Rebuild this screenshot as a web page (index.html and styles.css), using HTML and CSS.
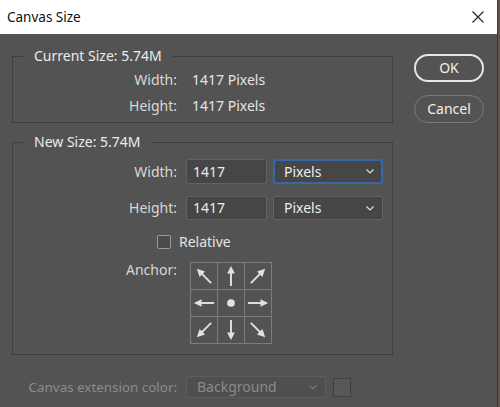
FILE: index.html
```html
<!DOCTYPE html>
<html>
<head>
<meta charset="utf-8">
<link rel="stylesheet" href="styles.css">
</head>
<body>
<div class="window">
  <div class="dialog">
    <div class="titlebar">
      <span class="title">Canvas Size</span>
      <svg class="close" width="12" height="12" viewBox="0 0 12 12"><path d="M0.5 0.5 L11.5 11.5 M11.5 0.5 L0.5 11.5" stroke="#222" stroke-width="1.1" fill="none"/></svg>
    </div>
    <div class="body">
      <div class="main">
        <fieldset class="group current">
          <legend>Current Size: 5.74M</legend>
          <div class="info-grid">
            <span class="lbl">Width:</span><span class="val">1417 Pixels</span>
            <span class="lbl">Height:</span><span class="val">1417 Pixels</span>
          </div>
        </fieldset>
        <fieldset class="group newsize">
          <legend>New Size: 5.74M</legend>
          <div class="form-grid">
            <span class="lbl">Width:</span>
            <div class="controls">
              <div class="input">1417</div>
              <div class="select focused"><span>Pixels</span><svg class="chev" width="8" height="5" viewBox="0 0 8 5"><path d="M0.5 0.5 L4 4 L7.5 0.5" stroke="#ddd" stroke-width="1.2" fill="none"/></svg></div>
            </div>
            <span class="lbl">Height:</span>
            <div class="controls">
              <div class="input">1417</div>
              <div class="select"><span>Pixels</span><svg class="chev" width="8" height="5" viewBox="0 0 8 5"><path d="M0.5 0.5 L4 4 L7.5 0.5" stroke="#ddd" stroke-width="1.2" fill="none"/></svg></div>
            </div>
            <div class="relative-row"><span class="checkbox"></span><span>Relative</span></div>
            <span class="lbl anchor-lbl">Anchor:</span>
            <div class="anchor">
              <div class="cell"><svg viewBox="0 0 27 27"><g transform="rotate(-45 13.5 13.5)"><line x1="13.5" y1="9" x2="13.5" y2="24" stroke="#e2e2e2" stroke-width="2"/><polygon points="13.5,3 9.5,11 17.5,11" fill="#e2e2e2"/></g></svg></div>
              <div class="cell"><svg viewBox="0 0 27 27"><g><line x1="13.5" y1="9" x2="13.5" y2="24" stroke="#e2e2e2" stroke-width="2"/><polygon points="13.5,3 9.5,11 17.5,11" fill="#e2e2e2"/></g></svg></div>
              <div class="cell"><svg viewBox="0 0 27 27"><g transform="rotate(45 13.5 13.5)"><line x1="13.5" y1="9" x2="13.5" y2="24" stroke="#e2e2e2" stroke-width="2"/><polygon points="13.5,3 9.5,11 17.5,11" fill="#e2e2e2"/></g></svg></div>
              <div class="cell"><svg viewBox="0 0 27 27"><g transform="rotate(-90 13.5 13.5)"><line x1="13.5" y1="9" x2="13.5" y2="24" stroke="#e2e2e2" stroke-width="2"/><polygon points="13.5,3 9.5,11 17.5,11" fill="#e2e2e2"/></g></svg></div>
              <div class="cell"><svg viewBox="0 0 27 27"><circle cx="13.5" cy="13.5" r="4" fill="#e2e2e2"/></svg></div>
              <div class="cell"><svg viewBox="0 0 27 27"><g transform="rotate(90 13.5 13.5)"><line x1="13.5" y1="9" x2="13.5" y2="24" stroke="#e2e2e2" stroke-width="2"/><polygon points="13.5,3 9.5,11 17.5,11" fill="#e2e2e2"/></g></svg></div>
              <div class="cell"><svg viewBox="0 0 27 27"><g transform="rotate(-135 13.5 13.5)"><line x1="13.5" y1="9" x2="13.5" y2="24" stroke="#e2e2e2" stroke-width="2"/><polygon points="13.5,3 9.5,11 17.5,11" fill="#e2e2e2"/></g></svg></div>
              <div class="cell"><svg viewBox="0 0 27 27"><g transform="rotate(180 13.5 13.5)"><line x1="13.5" y1="9" x2="13.5" y2="24" stroke="#e2e2e2" stroke-width="2"/><polygon points="13.5,3 9.5,11 17.5,11" fill="#e2e2e2"/></g></svg></div>
              <div class="cell"><svg viewBox="0 0 27 27"><g transform="rotate(135 13.5 13.5)"><line x1="13.5" y1="9" x2="13.5" y2="24" stroke="#e2e2e2" stroke-width="2"/><polygon points="13.5,3 9.5,11 17.5,11" fill="#e2e2e2"/></g></svg></div>
            </div>
          </div>
        </fieldset>
        <div class="ext-row">
          <span class="lbl disabled">Canvas extension color:</span>
          <div class="ext-controls">
            <div class="select disabled-select"><span>Background</span><svg class="chev" width="8" height="5" viewBox="0 0 8 5"><path d="M0.5 0.5 L4 4 L7.5 0.5" stroke="#7a7a7a" stroke-width="1.2" fill="none"/></svg></div>
            <div class="swatch"></div>
          </div>
        </div>
      </div>
      <div class="buttons">
        <div class="btn ok">OK</div>
        <div class="btn cancel">Cancel</div>
      </div>
    </div>
  </div>
  <div class="edge"></div>
</div>
</body>
</html>
```

FILE: styles.css
```css
* { box-sizing: border-box; }
html, body { margin: 0; padding: 0; }
body {
  width: 500px;
  height: 407px;
  overflow: hidden;
  font-family: "Noto Sans", "Open Sans", sans-serif;
  font-size: 14px;
  line-height: 20px;
  color: #e4e4e4;
  background: #535353;
}
.window { display: flex; width: 500px; height: 407px; }
.dialog { width: 497px; height: 407px; display: flex; flex-direction: column; background: #535353; }
.edge { width: 3px; height: 407px; background: #5e5448; border-left: 1px solid #3d3a36; }

.titlebar {
  height: 34px;
  background: #ffffff;
  display: flex;
  align-items: center;
  justify-content: space-between;
  padding: 0 13px 0 7px;
}
.title { color: #111; font-size: 13.5px; }
.close { display: block; }

.body { display: flex; padding: 12px 0 0 12px; }
.main { width: 381px; }

.group {
  margin: 0;
  padding: 0;
  border: 1px solid #3f3f3f;
}
.group legend {
  margin-left: 10px;
  padding: 0 11px;
  line-height: 20px;
  color: #ececec;
}
.current { height: 77px; }
.newsize { margin-top: 9px; }

.info-grid {
  display: grid;
  grid-template-columns: 164px auto;
  column-gap: 15px;
  row-gap: 6px;
  padding-top: 4px;
}
.lbl { text-align: right; color: #d8d8d8; }
.val { color: #e4e4e4; }

.form-grid {
  display: grid;
  grid-template-columns: 164px 1fr;
  grid-template-rows: 25px 24px 18px 82px;
  column-gap: 9px;
  row-gap: 12px;
  padding: 7px 0 10px;
  align-items: center;
}
.controls { display: flex; gap: 6px; height: 100%; }
.input {
  width: 81px;
  height: 100%;
  background: #464646;
  border: 1px solid #626262;
  border-radius: 2px;
  padding-left: 6px;
  display: flex;
  align-items: center;
  color: #ececec;
}
.select {
  width: 110px;
  height: 100%;
  background: #464646;
  border: 1px solid #626262;
  border-radius: 3px;
  padding: 0 8px 0 10px;
  display: flex;
  align-items: center;
  justify-content: space-between;
  color: #ececec;
}
.select.focused { border: 2px solid #3767aa; padding-left: 9px; padding-right: 7px; }
.chev { display: block; }

.relative-row {
  grid-column: 1 / -1;
  display: flex;
  align-items: center;
  gap: 8px;
  padding-left: 144px;
  margin-top: 1px;
}
.checkbox {
  width: 14px;
  height: 14px;
  border: 1px solid #9a9a9a;
  border-radius: 2px;
  background: #4b4b4b;
}
.anchor-lbl { align-self: start; margin-top: -2px; }
.anchor {
  margin-left: 4px;
  width: 82px;
  height: 82px;
  display: grid;
  grid-template-columns: repeat(3, 1fr);
  grid-template-rows: repeat(3, 1fr);
  border: 1px solid #7c7c7c;
  background: #7c7c7c;
  gap: 1px;
}
.cell { background: #535353; display: flex; }
.cell svg { width: 100%; height: 100%; display: block; }

.ext-row {
  display: grid;
  grid-template-columns: 164px auto;
  column-gap: 9px;
  padding-left: 1px;
  margin-top: 21px;
  align-items: center;
}
.lbl.disabled { color: #8c8c8c; font-size: 13.4px; }
.ext-controls { display: flex; gap: 7px; align-items: center; }
.disabled-select {
  width: 140px;
  height: 22px;
  background: #4f4f4f;
  border: 1px solid #5d5d5d;
  color: #8a8a8a;
}
.swatch {
  width: 18px;
  height: 19px;
  border: 1px solid #404040;
  background: #585858;
}

.buttons {
  margin-left: 21px;
  margin-top: 8px;
  display: flex;
  flex-direction: column;
  gap: 13px;
}
.btn {
  width: 70px;
  height: 28px;
  border-radius: 14px;
  display: flex;
  align-items: center;
  justify-content: center;
  font-size: 14px;
  color: #f0f0f0;
}
.ok { border: 2px solid #e6e6e6; }
.cancel { border: 1px solid #7a7a7a; }
```
